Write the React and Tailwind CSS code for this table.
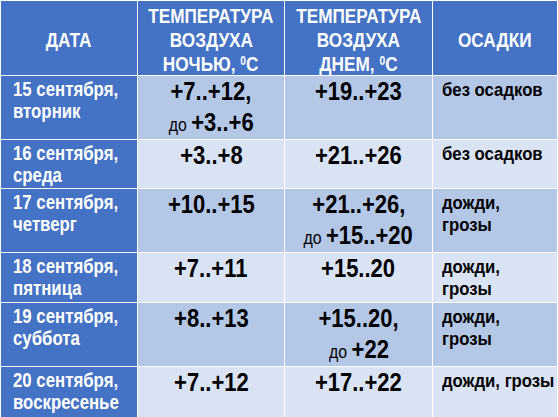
import React from "react";

const rows = [
  { date: ["15 сентября,", "вторник"], night: ["+7..+12,", ["до", "+3..+6"]], day: ["+19..+23"], precip: ["без осадков"], dark: true },
  { date: ["16 сентября,", "среда"], night: ["+3..+8"], day: ["+21..+26"], precip: ["без осадков"], dark: false },
  { date: ["17 сентября,", "четверг"], night: ["+10..+15"], day: ["+21..+26,", ["до", "+15..+20"]], precip: ["дожди,", "грозы"], dark: true },
  { date: ["18 сентября,", "пятница"], night: ["+7..+11"], day: ["+15..20"], precip: ["дожди,", "грозы"], dark: false },
  { date: ["19 сентября,", "суббота"], night: ["+8..+13"], day: ["+15..20,", ["до", "+22"]], precip: ["дожди,", "грозы"], dark: true },
  { date: ["20 сентября,", "воскресенье"], night: ["+7..+12"], day: ["+17..+22"], precip: ["дожди, грозы"], dark: false },
];

function Header({ lines }) {
  return (
    <div className="bg-[#4472C4] flex flex-col items-center justify-center pt-[3px] text-white font-bold text-[20px] leading-[24px]">
      {lines.map((l, i) => (
        <span key={i} className="inline-block whitespace-nowrap scale-x-[0.86] origin-center">{l}</span>
      ))}
    </div>
  );
}

function Values({ lines, dark }) {
  return (
    <div className={`${dark ? "bg-[#B4C7E7]" : "bg-[#DAE3F3]"} flex flex-col items-center pt-px text-black`}>
      {lines.map((l, i) =>
        Array.isArray(l) ? (
          <span key={i} className="inline-block whitespace-nowrap scale-x-[0.88] origin-center leading-[35px]">
            <span className="text-[18px] font-normal">{l[0]} </span>
            <span className="text-[25px] font-bold">{l[1]}</span>
          </span>
        ) : (
          <span key={i} className="inline-block whitespace-nowrap scale-x-[0.88] origin-center text-[25px] font-bold leading-[28px]">{l}</span>
        )
      )}
    </div>
  );
}

export default function App() {
  return (
    <div className="w-[558px] h-[417px] overflow-hidden bg-white pt-px pl-px font-['Liberation_Sans',Arial,sans-serif]">
      <div className="grid grid-cols-[136px_146px_147px_124px] grid-rows-[74px_63px_48px_63px_49px_63px_50px] gap-px">
        <Header lines={["ДАТА"]} />
        <Header lines={["ТЕМПЕРАТУРА", "ВОЗДУХА", <>НОЧЬЮ, <sup className="text-[12px]">0</sup>С</>]} />
        <Header lines={["ТЕМПЕРАТУРА", "ВОЗДУХА", <>ДНЕМ, <sup className="text-[12px]">0</sup>С</>]} />
        <Header lines={["ОСАДКИ"]} />
        {rows.map((r, i) => (
          <React.Fragment key={i}>
            <div className="bg-[#4472C4] flex flex-col items-start pl-3 pt-[2px] text-white font-bold text-[21px] leading-[22px]">
              {r.date.map((d, j) => (
                <span key={j} className="inline-block whitespace-nowrap scale-x-[0.8] origin-left">{d}</span>
              ))}
            </div>
            <Values lines={r.night} dark={r.dark} />
            <Values lines={r.day} dark={r.dark} />
            <div className={`${r.dark ? "bg-[#B4C7E7]" : "bg-[#DAE3F3]"} flex flex-col items-start pl-[9px] pt-[3px] text-black font-bold text-[19px] leading-[22px]`}>
              {r.precip.map((p, j) => (
                <span key={j} className="inline-block whitespace-nowrap scale-x-[0.88] origin-left">{p}</span>
              ))}
            </div>
          </React.Fragment>
        ))}
      </div>
    </div>
  );
}
